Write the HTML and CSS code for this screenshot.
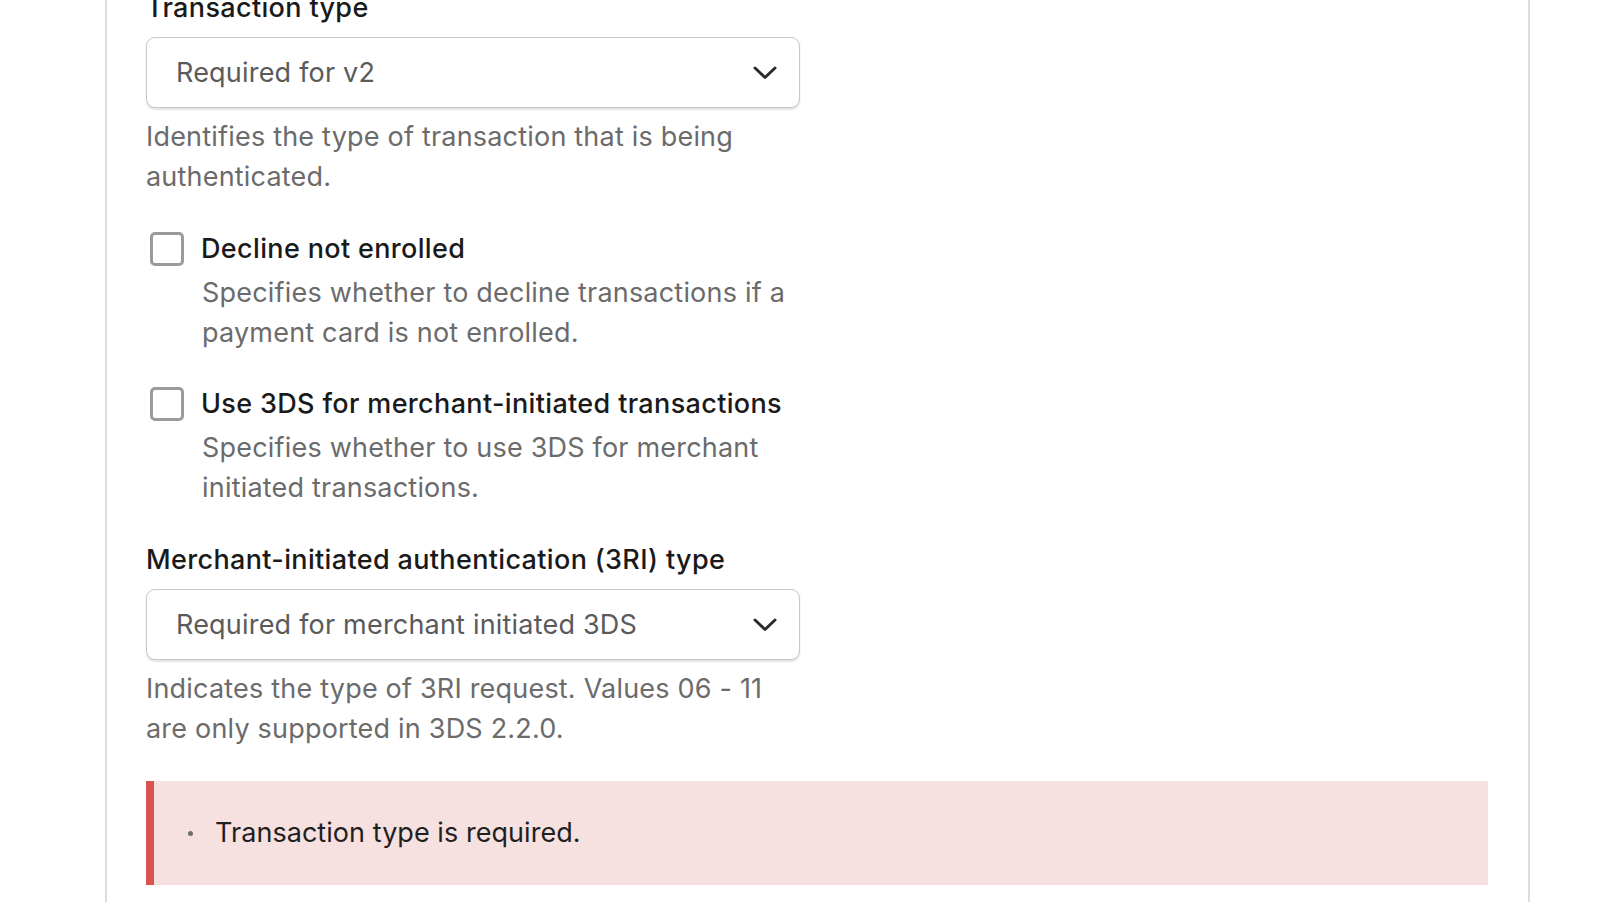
FILE: index.html
```html
<!DOCTYPE html>
<html lang="en">
<head>
<meta charset="utf-8">
<title>3DS settings</title>
<link rel="stylesheet" href="styles.css">
</head>
<body>
<div class="page">
  <section class="panel">
    <div class="field">
      <label class="field-label">Transaction type</label>
      <div class="select">
        <span class="select-value">Required for v2</span>
        <svg class="chevron" viewBox="0 0 24 14" width="24" height="14"><path d="M2 2 L12 11.5 L22 2" fill="none" stroke="#2b2b2b" stroke-width="3" stroke-linecap="round" stroke-linejoin="round"/></svg>
      </div>
      <p class="help">Identifies the type of transaction that is being authenticated.</p>
    </div>

    <div class="check-field">
      <div class="check-row">
        <span class="checkbox"></span>
        <span class="check-label">Decline not enrolled</span>
      </div>
      <p class="help indent">Specifies whether to decline transactions if a payment card is not enrolled.</p>
    </div>

    <div class="check-field">
      <div class="check-row">
        <span class="checkbox"></span>
        <span class="check-label">Use 3DS for merchant-initiated transactions</span>
      </div>
      <p class="help indent">Specifies whether to use 3DS for merchant initiated transactions.</p>
    </div>

    <div class="field">
      <label class="field-label">Merchant-initiated authentication (3RI) type</label>
      <div class="select">
        <span class="select-value">Required for merchant initiated 3DS</span>
        <svg class="chevron" viewBox="0 0 24 14" width="24" height="14"><path d="M2 2 L12 11.5 L22 2" fill="none" stroke="#2b2b2b" stroke-width="3" stroke-linecap="round" stroke-linejoin="round"/></svg>
      </div>
      <p class="help">Indicates the type of 3RI request. Values 06 - 11 are only supported in 3DS 2.2.0.</p>
    </div>

    <div class="error-box">
      <ul class="error-list">
        <li>Transaction type is required.</li>
      </ul>
    </div>
  </section>
</div>
</body>
</html>
```

FILE: styles.css
```css
html, body {
  margin: 0;
  padding: 0;
  background: #ffffff;
  overflow: hidden;
}

body {
  font-family: Inter, "Noto Sans", "Liberation Sans", sans-serif;
  font-size: 27px;
  line-height: 40px;
  color: #1f1f1f;
}

.page {
  height: 902px;
  overflow: hidden;
  padding-left: 105px;
  width: 1425px;
}

.panel {
  margin-top: -12px;
  border-left: 2px solid #dcdcdc;
  border-right: 2px solid #dcdcdc;
  padding: 0 40px 0 39px;
  height: 914px;
  box-sizing: border-box;
}

.field-label {
  display: block;
  font-weight: 500;
  color: #1a1a1a;
  letter-spacing: 0.35px;
}

.select {
  margin-top: 9px;
  width: 654px;
  height: 71px;
  box-sizing: border-box;
  border: 1.5px solid #c9c9c9;
  border-radius: 9px;
  box-shadow: 0 1.5px 2px rgba(0, 0, 0, 0.12);
  display: flex;
  align-items: center;
  justify-content: space-between;
  padding: 0 22px 0 29px;
  background: #fff;
}

.select-value {
  color: #5a5a5a;
  letter-spacing: 0.2px;
}

.chevron {
  display: block;
}

.help {
  margin: 9px 0 0;
  width: 654px;
  color: #6b6b6b;
  letter-spacing: 0.2px;
}

.help.indent {
  margin-top: 4px;
  margin-left: 56px;
  width: 600px;
}

.check-field {
  margin-top: 32px;
}

.check-field + .check-field {
  margin-top: 31px;
}

.check-field + .field {
  margin-top: 32px;
}

.check-row {
  display: flex;
  align-items: center;
  gap: 17px;
}

.checkbox {
  width: 34px;
  height: 34px;
  box-sizing: border-box;
  border: 3px solid #9b9b9b;
  border-radius: 5px;
  margin-left: 4px;
  flex: none;
}

.check-label {
  font-weight: 500;
  color: #1a1a1a;
  letter-spacing: 0.35px;
}

.error-box {
  margin-top: 32px;
  background: #f6e0e0;
  border-left: 8px solid #d9534f;
  padding: 32px 0;
}

.error-list {
  list-style: none;
  margin: 0;
  padding: 0 0 0 61px;
}

.error-list li {
  position: relative;
  color: #1f1f1f;
  letter-spacing: 0.05px;
}

.error-list li::before {
  content: "";
  position: absolute;
  left: -27px;
  top: 18px;
  width: 5px;
  height: 5px;
  border-radius: 50%;
  background: #6e6e6e;
}
```
